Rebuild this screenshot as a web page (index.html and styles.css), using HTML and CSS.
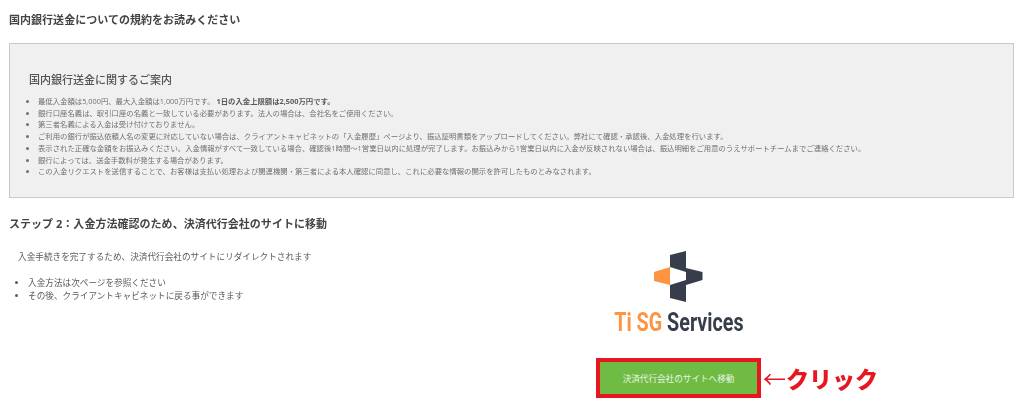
FILE: index.html
```html
<!DOCTYPE html>
<html lang="ja">
<head>
<meta charset="utf-8">
<title>国内銀行送金</title>
<link rel="stylesheet" href="styles.css">
</head>
<body>
<main class="page">
  <h2 class="heading first">国内銀行送金についての規約をお読みください</h2>
  <section class="notice">
    <h3 class="notice-title">国内銀行送金に関するご案内</h3>
    <ul class="notice-list">
      <li>最低入金額は5,000円、最大入金額は1,000万円です。 <b>1日の入金上限額は2,500万円です。</b></li>
      <li>銀行口座名義は、取引口座の名義と一致している必要があります。法人の場合は、会社名をご使用ください。</li>
      <li>第三者名義による入金は受け付けておりません。</li>
      <li>ご利用の銀行が振込依頼人名の変更に対応していない場合は、クライアントキャビネットの「入金履歴」ページより、振込証明書類をアップロードしてください。弊社にて確認・承認後、入金処理を行います。</li>
      <li>表示された正確な金額をお振込みください。入金情報がすべて一致している場合、確認後1時間～1営業日以内に処理が完了します。お振込みから1営業日以内に入金が反映されない場合は、振込明細をご用意のうえサポートチームまでご連絡ください。</li>
      <li>銀行によっては、送金手数料が発生する場合があります。</li>
      <li>この入金リクエストを送信することで、お客様は支払い処理および関連機関・第三者による本人確認に同意し、これに必要な情報の開示を許可したものとみなされます。</li>
    </ul>
  </section>
  <h2 class="heading second">ステップ 2：入金方法確認のため、決済代行会社のサイトに移動</h2>
  <div class="step">
    <div class="step-text">
      <p class="step-lead">入金手続きを完了するため、決済代行会社のサイトにリダイレクトされます</p>
      <ul class="step-list">
        <li>入金方法は次ページを参照ください</li>
        <li>その後、クライアントキャビネットに戻る事ができます</li>
      </ul>
    </div>
    <div class="step-action">
      <div class="logo">
        <svg class="logo-mark" viewBox="0 0 49 51" width="49" height="51" aria-hidden="true">
          <polygon fill="#ff9440" points="0,21 16,16 16,34 0,30"/>
          <path fill="#373d4b" d="M16 4 32 0V17L48.5 21V29L32 34V51L16 47V34L32 29V21L16 16Z"/>
        </svg>
        <div class="logo-name"><span class="logo-accent">Ti SG</span> Services</div>
      </div>
      <div class="cta-wrap">
        <a class="cta">決済代行会社のサイトへ移動</a>
        <span class="callout"><span class="callout-arrow">←</span>クリック</span>
      </div>
    </div>
  </div>
</main>
</body>
</html>
```
FILE: styles.css
```css
* { box-sizing: border-box; }
html, body { margin: 0; background: #fff; }
body {
  width: 1024px;
  height: 414px;
  overflow: hidden;
  font-family: "Open Sans", "Noto Sans CJK JP", sans-serif;
  color: #555;
}
.page { padding: 13px 10px 0 9px; filter: blur(0.35px); }
.heading {
  margin: 0;
  font-size: 11px;
  line-height: 13px;
  font-weight: 700;
  color: #444;
  letter-spacing: 0.03px;
}
.notice {
  margin-top: 17px;
  height: 155px;
  padding: 29px 19px 0;
  background: #f0f0f0;
  border: 1px solid #c9c9c9;
}
.notice-title {
  margin: 0;
  font-size: 11px;
  line-height: 14px;
  font-weight: 500;
  color: #555;
}
.notice-list {
  margin: 9px 0 0;
  padding: 0 0 0 9px;
  font-size: 7.37px;
  line-height: 11.7px;
  color: #707070;
}
.notice-list li { white-space: nowrap; }
.notice-list b { color: #5a5a5a; }
.second { margin-top: 19px; }
.step { display: flex; }
.step-text { width: 587px; padding: 21px 0 0 9px; }
.step-lead {
  margin: 0;
  font-size: 8.63px;
  line-height: 13px;
  color: #5a5a5a;
}
.step-list {
  margin: 13px 0 0;
  padding: 0 0 0 10px;
  font-size: 8.63px;
  line-height: 13px;
  color: #5a5a5a;
}
.step-action {
  width: 165px;
  margin-top: 21px;
  display: flex;
  flex-direction: column;
  align-items: center;
}
.logo { display: flex; flex-direction: column; align-items: center; }
.logo-mark { display: block; }
.logo-name {
  margin-top: 9px;
  font-family: "Roboto", sans-serif;
  font-size: 25px;
  line-height: 24px;
  font-weight: 700;
  color: #373d4b;
  white-space: nowrap;
  transform: scaleX(0.79);
}
.logo-accent { color: #ff9440; }
.cta-wrap { position: relative; margin-top: 23px; width: 165px; }
.cta {
  display: flex;
  align-items: center;
  justify-content: center;
  height: 40px;
  background: #6fbb43;
  border: 4px solid #e8161f;
  color: #e9f5e2;
  font-size: 8.6px;
}
.callout {
  position: absolute;
  left: 167px;
  top: 4px;
  font-size: 23px;
  line-height: 34px;
  font-weight: 900;
  color: #e8161f;
  white-space: nowrap;
}
.callout-arrow { font-weight: 400; }
```
